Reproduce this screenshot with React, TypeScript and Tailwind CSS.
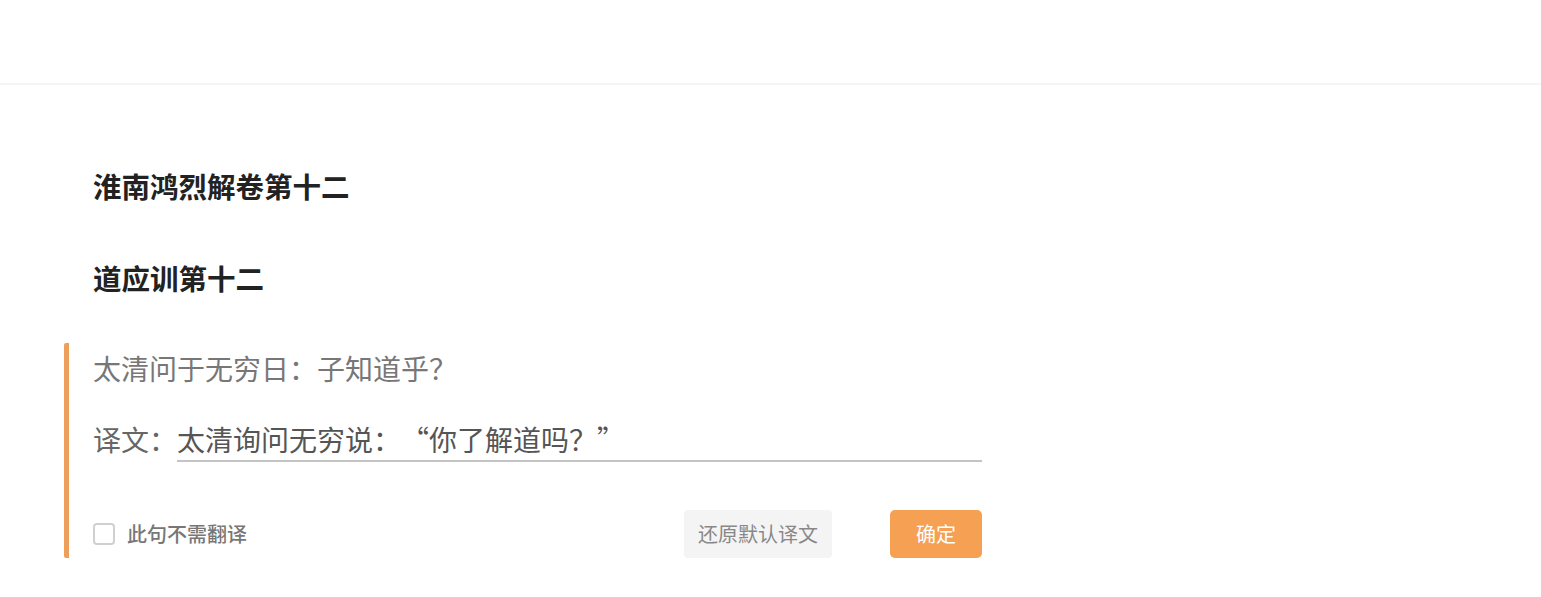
import React, { useState } from 'react';

const font = { fontFamily: '"Noto Sans CJK SC", "Noto Sans", sans-serif' };

export default function App() {
  const [skip, setSkip] = useState(false);
  const [text, setText] = useState('太清询问无穷说：“你了解道吗？”');

  return (
    <div className="min-h-screen bg-white [text-spacing-trim:space-all]" style={font}>
      <header className="h-[85px] border-b-2 border-[#f5f5f5]" />

      <main className="pl-[64px] w-[982px]">
        <h1 className="pl-[29px] pt-[83px] text-[28.5px] leading-[36px] font-bold text-[#222]">淮南鸿烈解卷第十二</h1>
        <h2 className="pl-[29px] mt-[56px] text-[28.5px] leading-[36px] font-bold text-[#222]">道应训第十二</h2>

        <section className="mt-[47px] border-l-[5px] border-[#ef9f5c] pl-[24px] pt-[7px] rounded-[2px]">
          <p className="text-[28px] leading-[36px] text-[#777]">太清问于无穷日：子知道乎？</p>

          <div className="mt-[35px] flex items-end text-[28px] text-[#666]">
            <span className="leading-[36px] pb-[5px]">译文：</span>
            <input
              value={text}
              onChange={(e) => setText(e.target.value)}
              className="flex-1 bg-transparent outline-none border-b-2 border-[#c4c4c4] leading-[36px] pb-[3px] text-[#555] [text-spacing-trim:space-all]"
            />
          </div>

          <div className="mt-[48px] flex items-center">
            <label className="flex items-center gap-[12px] cursor-pointer">
              <input
                type="checkbox"
                checked={skip}
                onChange={(e) => setSkip(e.target.checked)}
                className="appearance-none w-[22px] h-[22px] rounded-[4px] border-2 border-[#d0d0d0] bg-white checked:bg-[#f5a052] checked:border-[#f5a052]"
              />
              <span className="text-[20px] font-medium text-[#777]">此句不需翻译</span>
            </label>

            <button className="ml-auto w-[148px] h-[48px] rounded-[4px] bg-[#f4f4f4] text-[20px] text-[#888]">
              还原默认译文
            </button>
            <button className="ml-[58px] w-[92px] h-[48px] rounded-[5px] bg-[#f5a052] text-[20px] text-white">
              确定
            </button>
          </div>
        </section>
      </main>
    </div>
  );
}
